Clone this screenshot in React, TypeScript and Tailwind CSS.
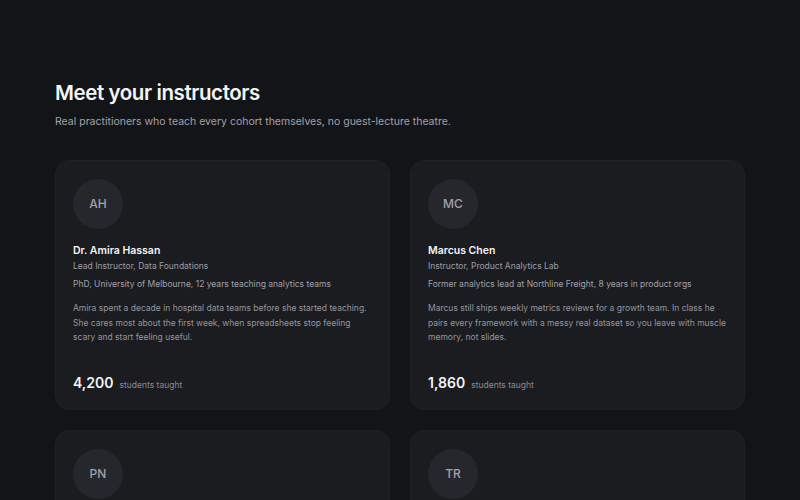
const instructors = [
  {
    initials: 'AH',
    name: 'Dr. Amira Hassan',
    role: 'Lead Instructor, Data Foundations',
    creds: 'PhD, University of Melbourne, 12 years teaching analytics teams',
    bio: 'Amira spent a decade in hospital data teams before she started teaching. She cares most about the first week, when spreadsheets stop feeling scary and start feeling useful.',
    students: '4,200',
  },
  {
    initials: 'MC',
    name: 'Marcus Chen',
    role: 'Instructor, Product Analytics Lab',
    creds: 'Former analytics lead at Northline Freight, 8 years in product orgs',
    bio: 'Marcus still ships weekly metrics reviews for a growth team. In class he pairs every framework with a messy real dataset so you leave with muscle memory, not slides.',
    students: '1,860',
  },
  {
    initials: 'PN',
    name: 'Priya Nair',
    role: 'Instructor, SQL & Data Modelling',
    creds: 'Data engineer at Harbourline Bank, 6 years building warehouses',
    bio: 'Priya teaches the parts of SQL nobody explains: joins that go wrong, nulls that hide, and how to tell when a number is lying to you.',
    students: '2,340',
  },
  {
    initials: 'TR',
    name: 'Tom Reyes',
    role: 'Instructor, Visualisation Studio',
    creds: 'Design lead at Fieldnote Studio, 9 years in data journalism',
    bio: 'Tom runs the critique sessions. Bring a chart, leave with a story that a busy stakeholder can read in ten seconds.',
    students: '1,520',
  },
];

export default function App() {
  return (
    <div className="min-h-screen bg-[#131417] px-[55px] pt-[79px] pb-16 font-['Inter',sans-serif]">
      <h1 className="text-[20.5px] leading-7 font-semibold tracking-[-0.02em] text-[#f4f4f5]">Meet your instructors</h1>
      <p className="mt-[7px] text-[10.5px] leading-4 text-[#a1a1aa]">
        Real practitioners who teach every cohort themselves, no guest-lecture theatre.
      </p>

      <div className="mt-[30px] grid grid-cols-2 gap-5">
        {instructors.map(ins => (
          <div
            key={ins.initials}
            className="flex flex-col rounded-[14px] border border-[#202126] bg-[#1b1c20] px-[17px] pt-[18px] pb-[16px]"
          >
            <div className="flex h-[50px] w-[50px] items-center justify-center rounded-full bg-[#26272c] text-[12px] font-medium text-[#a1a1aa]">
              {ins.initials}
            </div>
            <div className="mt-[15px] text-[10.5px] leading-[14px] font-semibold text-[#f4f4f5]">{ins.name}</div>
            <div className="mt-[1px] text-[8.5px] leading-[14px] text-[#9d9da5]">{ins.role}</div>
            <div className="mt-[4px] text-[8.5px] leading-[14px] text-[#a1a1aa]">{ins.creds}</div>
            <p className="mt-[10px] text-[8.5px] leading-[14.5px] text-[#95959d]">{ins.bio}</p>
            <div className="mt-[28px] flex items-baseline gap-[6px]">
              <span className="text-[14px] leading-5 font-semibold text-[#f4f4f5]">{ins.students}</span>
              <span className="text-[8.5px] text-[#8b8b93]">students taught</span>
            </div>
          </div>
        ))}
      </div>
    </div>
  );
}
